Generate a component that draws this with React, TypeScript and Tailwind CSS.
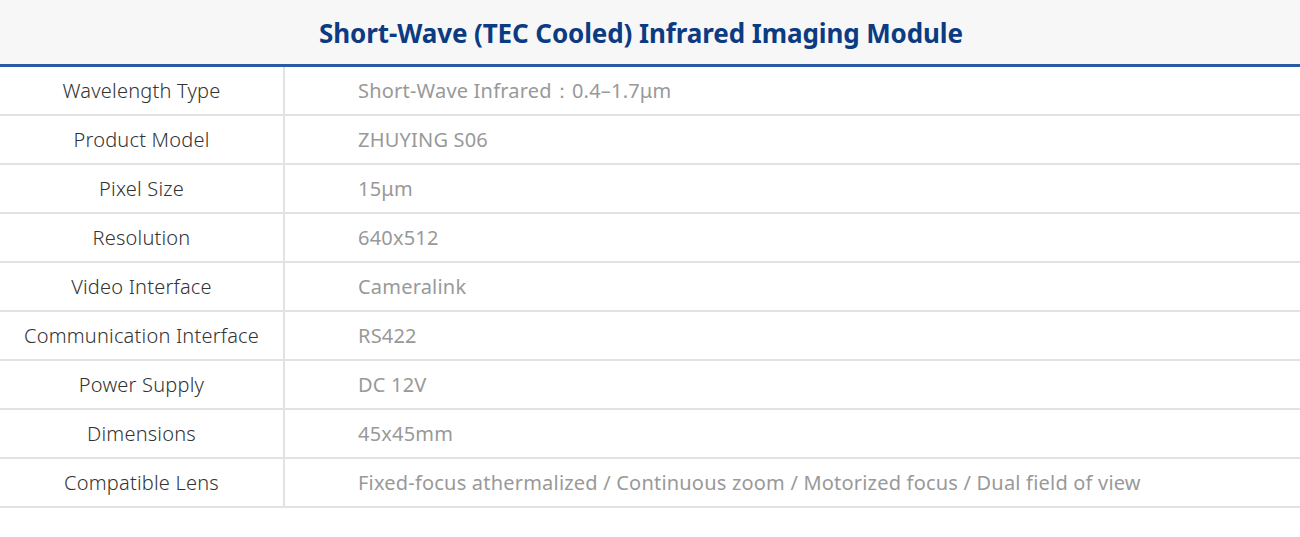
const rows: [string, string][] = [
  ["Wavelength Type", "Short-Wave Infrared：0.4–1.7μm"],
  ["Product Model", "ZHUYING S06"],
  ["Pixel Size", "15μm"],
  ["Resolution", "640x512"],
  ["Video Interface", "Cameralink"],
  ["Communication Interface", "RS422"],
  ["Power Supply", "DC 12V"],
  ["Dimensions", "45x45mm"],
  ["Compatible Lens", "Fixed-focus athermalized / Continuous zoom / Motorized focus / Dual field of view"],
];

export default function App() {
  return (
    <div className="w-[1300px] h-[537px] bg-white font-['Noto_Sans','Open_Sans',sans-serif]">
      <div className="h-[67px] bg-[#f7f7f7] flex items-center justify-center pr-[18px] pt-[2px] border-b-[3px] border-[#2a5aa6]">
        <h1 className="text-[26px] font-bold text-[#0b3b82] tracking-[-0.1px]">
          Short-Wave (TEC Cooled) Infrared Imaging Module
        </h1>
      </div>
      <div>
        {rows.map(([label, value]) => (
          <div key={label} className="flex h-[49px] border-b-2 border-[#e2e2e2]">
            <div className="w-[285px] flex items-center justify-center border-r-2 border-[#e2e2e2] text-[20px] text-[#333] tracking-[0.2px] font-light">
              {label}
            </div>
            <div className="flex-1 flex items-center pl-[73px] text-[20px] text-[#999] tracking-[0.2px]">
              {value}
            </div>
          </div>
        ))}
      </div>
    </div>
  );
}
